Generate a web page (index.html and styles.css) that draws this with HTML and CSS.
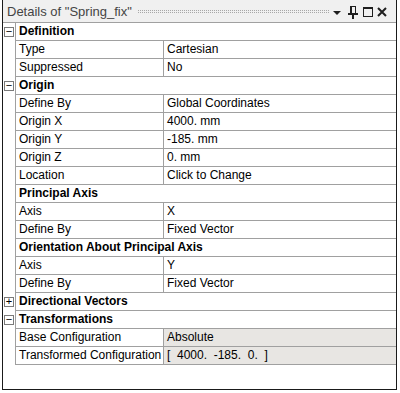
FILE: index.html
```html
<!DOCTYPE html>
<html lang="en">
<head>
    <meta charset="UTF-8">
    <title>Details of "Spring_fix"</title>
    <link rel="stylesheet" href="styles.css">
</head>
<body>
    <div class="panel">
        <div class="titlebar">
            <span class="title">Details of "Spring_fix"</span>
            <span class="grip"></span>
            <svg class="tools" width="56" height="14" viewBox="0 0 56 14">
                <polygon points="0,6 8,6 4,10" fill="#1e1e1e"/>
                <!-- pin -->
                <rect x="17.5" y="1.5" width="5" height="7" fill="none" stroke="#1e1e1e"/>
                <rect x="17" y="1" width="2" height="8" fill="#1e1e1e"/>
                <rect x="15" y="8" width="10" height="2" fill="#1e1e1e"/>
                <rect x="19" y="10" width="2" height="4" fill="#1e1e1e"/>
                <!-- maximize -->
                <rect x="30.5" y="2.5" width="9" height="9" fill="none" stroke="#1e1e1e"/>
                <rect x="30" y="2" width="10" height="2" fill="#1e1e1e"/>
                <!-- close -->
                <path d="M45 3 L53 11 M53 3 L45 11" stroke="#1e1e1e" stroke-width="2"/>
            </svg>
        </div>

        <div class="grid">
            <div class="row cat"><span class="box">−</span><div class="main">Definition</div></div>
            <div class="row"><span class="gutter"></span><div class="main"><span class="name">Type</span><span class="val">Cartesian</span></div></div>
            <div class="row"><span class="gutter"></span><div class="main"><span class="name">Suppressed</span><span class="val">No</span></div></div>

            <div class="row cat"><span class="box">−</span><div class="main">Origin</div></div>
            <div class="row"><span class="gutter"></span><div class="main"><span class="name">Define By</span><span class="val">Global Coordinates</span></div></div>
            <div class="row"><span class="gutter"></span><div class="main"><span class="name">Origin X</span><span class="val">4000. mm</span></div></div>
            <div class="row"><span class="gutter"></span><div class="main"><span class="name">Origin Y</span><span class="val">-185. mm</span></div></div>
            <div class="row"><span class="gutter"></span><div class="main"><span class="name">Origin Z</span><span class="val">0. mm</span></div></div>
            <div class="row"><span class="gutter"></span><div class="main"><span class="name">Location</span><span class="val">Click to Change</span></div></div>

            <div class="row cat nobox"><span class="gutter"></span><div class="main">Principal Axis</div></div>
            <div class="row"><span class="gutter"></span><div class="main"><span class="name">Axis</span><span class="val">X</span></div></div>
            <div class="row"><span class="gutter"></span><div class="main"><span class="name">Define By</span><span class="val">Fixed Vector</span></div></div>

            <div class="row cat nobox"><span class="gutter"></span><div class="main">Orientation About Principal Axis</div></div>
            <div class="row"><span class="gutter"></span><div class="main"><span class="name">Axis</span><span class="val">Y</span></div></div>
            <div class="row"><span class="gutter"></span><div class="main"><span class="name">Define By</span><span class="val">Fixed Vector</span></div></div>

            <div class="row cat"><span class="box">+</span><div class="main">Directional Vectors</div></div>

            <div class="row cat"><span class="box">−</span><div class="main">Transformations</div></div>
            <div class="row"><span class="gutter"></span><div class="main"><span class="name">Base Configuration</span><span class="val ro">Absolute</span></div></div>
            <div class="row"><span class="gutter"></span><div class="main"><span class="name">Transformed Configuration</span><span class="val ro">[ &nbsp;4000. &nbsp;-185. &nbsp;0. &nbsp;]</span></div></div>
        </div>
    </div>
</body>
</html>
```

FILE: styles.css
```css
body{
    margin: 0;
    background-color: #ffffff;
    font-family: "Liberation Sans", Arial, sans-serif;
    font-size: 12px;
    color: #000000;
}

.panel{
    box-sizing: border-box;
    width: 395px;
    height: 390px;
    margin-left: 2px;
    border: 1px solid #1a1a1a;
    border-top: none;
    background-color: #ffffff;
}

.titlebar{
    height: 22px;
    display: flex;
    align-items: center;
    background-color: #f0f0f0;
    border-bottom: 1px solid #a0a0a0;
    padding-left: 4px;
}

.title{
    color: #444444;
    font-size: 13px;
    white-space: nowrap;
}

.grip{
    flex: 1;
    height: 1px;
    margin: 1px 4px 0 6px;
    border-top: 1px dotted #a8a8a8;
    border-bottom: 1px dotted #a8a8a8;
}

.tools{
    margin-right: 7px;
    margin-top: 1px;
}

.row{
    display: flex;
    height: 18px;
}

.gutter, .box{
    width: 12px;
    flex: none;
}

.box{
    box-sizing: border-box;
    width: 10px;
    height: 10px;
    margin: 4px 1px 0 1px;
    border: 1px solid #7a7a7a;
    font-size: 11px;
    line-height: 7px;
    text-align: center;
    color: #000000;
}

.main{
    flex: 1;
    display: flex;
    border-left: 1px solid #a0a0a0;
    border-bottom: 1px solid #a0a0a0;
    line-height: 17px;
}

.cat .main{
    font-weight: bold;
    padding-left: 3px;
}

.name{
    box-sizing: border-box;
    width: 148px;
    padding-left: 3px;
    border-right: 1px solid #a0a0a0;
    white-space: nowrap;
}

.val{
    flex: 1;
    padding-left: 3px;
    white-space: nowrap;
}

.ro{
    background-color: #e8e6e3;
}
```
